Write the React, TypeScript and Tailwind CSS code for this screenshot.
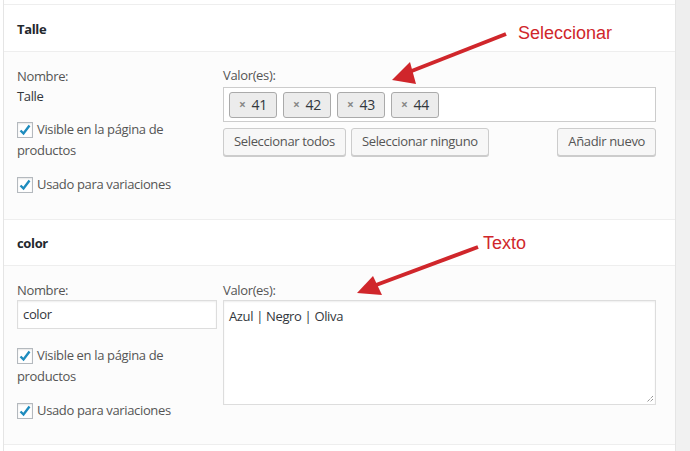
import React from "react";

const font = { fontFamily: '"Open Sans", "Noto Sans", sans-serif' };

function Check({ label, second }: { label: string; second?: string }) {
  return (
    <div className="text-[13px] leading-[21px] text-[#555]">
      <span className="inline-flex items-center align-top">
        <span className="mr-[4px] flex h-[16px] w-[16px] items-center justify-center border border-[#b4b9be] bg-white shadow-[inset_0_1px_2px_rgba(0,0,0,0.1)]">
          <svg width="14" height="14" viewBox="0 0 14 14">
            <path d="M2.5 7.5 L5.5 10.5 L11.5 2.5" fill="none" stroke="#1e8cbe" strokeWidth="2.4" />
          </svg>
        </span>
        {label}
      </span>
      {second && <div>{second}</div>}
    </div>
  );
}

function Btn({ children }: { children: React.ReactNode }) {
  return (
    <button className="h-[28px] rounded-[3px] border border-[#ccc] bg-[#f7f7f7] px-[10px] text-[13px] text-[#555] shadow-[0_1px_0_#ccc]">
      {children}
    </button>
  );
}

function Tag({ n }: { n: string }) {
  return (
    <span className="flex h-[26px] w-[48px] items-center justify-center gap-[6px] rounded-[3px] border border-[#aaa] bg-[#ececec] text-[14px] text-[#32373c]">
      <span className="text-[12px] font-bold text-[#888]">×</span>
      {n}
    </span>
  );
}

export default function App() {
  return (
    <div className="relative flex h-[451px] w-[690px] overflow-hidden bg-[#f1f1f1]" style={font}>
      <div className="w-[3px] bg-white" />
      <div className="flex w-[673px] flex-col border-x border-[#e5e5e5] bg-white tracking-[-0.35px]">
        <div className="h-[5px] border-b border-[#eee]" />
        {/* Talle */}
        <div className="flex h-[47px] items-center border-b border-[#eee] pl-[13px] pt-[3px] text-[13px] font-bold text-[#23282d]">
          Talle
        </div>
        <div className="flex h-[168px] gap-[6px] border-b border-[#eee] bg-[#fcfcfc] pl-[13px] pr-[19px] pt-[14px]">
          <div className="w-[200px]">
            <div className="text-[13px] leading-[21px] text-[#555]">Nombre:</div>
            <div className="text-[13px] leading-[19px] text-[#32373c]">Talle</div>
            <div className="mt-[13px]">
              <Check label="Visible en la página de" second="productos" />
            </div>
            <div className="mt-[13px]">
              <Check label="Usado para variaciones" />
            </div>
          </div>
          <div className="flex-1">
            <div className="text-[13px] leading-[19px] text-[#555]">Valor(es):</div>
            <div className="mt-[2px] flex h-[35px] items-center gap-[6px] border border-[#ccc] bg-white px-[5px]">
              <Tag n="41" />
              <Tag n="42" />
              <Tag n="43" />
              <Tag n="44" />
            </div>
            <div className="mt-[6px] flex gap-[5px]">
              <Btn>Seleccionar todos</Btn>
              <Btn>Seleccionar ninguno</Btn>
              <div className="flex-1" />
              <Btn>Añadir nuevo</Btn>
            </div>
          </div>
        </div>
        {/* color */}
        <div className="flex h-[46px] items-center border-b border-[#eee] pl-[13px] pt-[3px] text-[13px] font-bold text-[#23282d]">
          color
        </div>
        <div className="flex h-[179px] gap-[6px] border-b border-[#eee] bg-[#fcfcfc] pl-[13px] pr-[19px] pt-[14px]">
          <div className="w-[200px]">
            <div className="text-[13px] leading-[20px] text-[#555]">Nombre:</div>
            <div className="flex h-[29px] items-center border border-[#ddd] bg-white px-[5px] text-[13px] text-[#32373c] shadow-[inset_0_1px_2px_rgba(0,0,0,0.07)]">
              color
            </div>
            <div className="mt-[16px]">
              <Check label="Visible en la página de" second="productos" />
            </div>
            <div className="mt-[13px]">
              <Check label="Usado para variaciones" />
            </div>
          </div>
          <div className="flex-1">
            <div className="text-[13px] leading-[20px] text-[#555]">Valor(es):</div>
            <div className="relative h-[105px] border border-[#ddd] bg-white px-[5px] pt-[6px] text-[13px] text-[#32373c] shadow-[inset_0_1px_2px_rgba(0,0,0,0.07)]">
              Azul | Negro | Oliva
              <svg className="absolute bottom-[1px] right-[1px]" width="8" height="8" viewBox="0 0 8 8">
                <path d="M7 1 L1 7 M7 4 L4 7" stroke="#666" strokeWidth="1" strokeDasharray="1 1" />
              </svg>
            </div>
          </div>
        </div>
        <div className="flex-1" />
      </div>
      <div className="flex flex-1 flex-col">
        <div className="h-[100px] bg-[#eee]" />
      </div>

      {/* annotations */}
      <svg className="pointer-events-none absolute left-0 top-0" width="690" height="451">
        <line x1="506" y1="34" x2="404" y2="74" stroke="#d0262b" strokeWidth="4" />
        <polygon points="392,80 410,62 416,84" fill="#d0262b" />
        <line x1="478" y1="247" x2="368" y2="288" stroke="#d0262b" strokeWidth="4" />
        <polygon points="357,293 373,276 382,295" fill="#d0262b" />
      </svg>
      <span
        className="absolute left-[518px] top-[22px] text-[18px] leading-[22px] text-[#d0262b]"
        style={{ fontFamily: '"Liberation Sans", Arial, sans-serif' }}
      >
        Seleccionar
      </span>
      <span
        className="absolute left-[483px] top-[232px] text-[18px] leading-[22px] text-[#d0262b]"
        style={{ fontFamily: '"Liberation Sans", Arial, sans-serif' }}
      >
        Texto
      </span>
    </div>
  );
}
